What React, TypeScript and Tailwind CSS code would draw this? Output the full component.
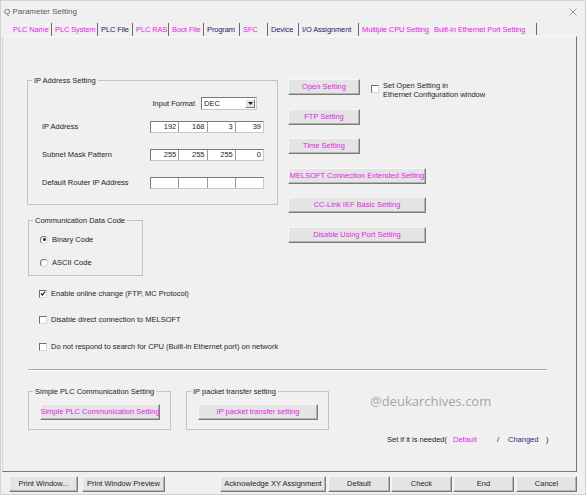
import React from "react"

const tabs = [
  { label: "PLC Name", w: "w-[41px]", c: "text-[#e21ee6]", sep: false },
  { label: "PLC System", w: "w-[46px]", c: "text-[#e21ee6]", sep: true },
  { label: "PLC File", w: "w-[35px]", c: "text-[#22226e]", sep: true },
  { label: "PLC RAS", w: "w-[36px]", c: "text-[#e21ee6]", sep: true },
  { label: "Boot File", w: "w-[35px]", c: "text-[#e21ee6]", sep: true },
  { label: "Program", w: "w-[36px]", c: "text-[#22226e]", sep: true },
  { label: "SFC", w: "w-[28px]", c: "text-[#e21ee6]", sep: true },
  { label: "Device", w: "w-[31px]", c: "text-[#22226e]", sep: true },
  { label: "I/O Assignment", w: "w-[60px]", c: "text-[#22226e]", sep: true },
  { label: "Multiple CPU Setting", w: "w-[73px]", c: "text-[#e21ee6]", sep: true },
  { label: "Built-in Ethernet Port Setting", w: "w-[105px]", c: "text-[#e21ee6]", sep: false },
]

function Btn({ w, children, dark }: { w: string; children: React.ReactNode; dark?: boolean }) {
  return (
    <div
      className={`flex h-[16px] shrink-0 items-center justify-center whitespace-nowrap border border-t-[#f6f6f6] border-l-[#f6f6f6] border-r-[#7a7a7a] border-b-[#7a7a7a] bg-[#e4e4e4] shadow-[inset_-1px_-1px_0_#b4b4b4] ${w} ${dark ? "text-[#1e1e1e]" : "text-[#e21ee6]"}`}
    >
      {children}
    </div>
  )
}

function Check({ on }: { on?: boolean }) {
  return (
    <div className="flex h-[8px] w-[8px] shrink-0 items-center justify-center border border-t-[#6e6e6e] border-l-[#6e6e6e] border-r-[#d8d8d8] border-b-[#d8d8d8] bg-white">
      {on && (
        <svg width="7" height="7" viewBox="0 0 7 7">
          <path d="M1 3.4 L2.8 5.4 L6 1.2" fill="none" stroke="#1e1e1e" strokeWidth="1.4" />
        </svg>
      )}
    </div>
  )
}

function Radio({ on }: { on?: boolean }) {
  return (
    <div className="flex h-[8px] w-[8px] shrink-0 items-center justify-center rounded-full border border-t-[#6e6e6e] border-l-[#6e6e6e] border-r-[#d8d8d8] border-b-[#d8d8d8] bg-white">
      {on && <div className="h-[3px] w-[3px] rounded-full bg-[#1e1e1e]" />}
    </div>
  )
}

function IpBoxes({ values }: { values: string[] }) {
  return (
    <div className="flex h-[12px] w-[114px] border border-t-[#7a7a7a] border-l-[#7a7a7a] border-r-[#c8c8c8] border-b-[#c8c8c8] bg-white">
      {values.map((v, i) => (
        <div
          key={i}
          className={`flex flex-1 items-center justify-end pr-[2px] leading-none ${i > 0 ? "border-l border-[#9a9a9a]" : ""}`}
        >
          {v}
        </div>
      ))}
    </div>
  )
}

export default function App() {
  return (
    <div className="relative h-[495px] w-[586px] overflow-hidden bg-[#f0f0f0] font-['Liberation_Sans',Arial,sans-serif] text-[7.5px] text-[#1e1e1e] shadow-[inset_0_0_0_1px_#d2d2d2]">
      {/* Title bar */}
      <div className="flex h-[22px] items-center justify-between pl-[4px] pr-[9px] pt-[2px]">
        <span className="text-[8px] text-[#5c5c5c]">Q Parameter Setting</span>
        <svg width="8" height="8" viewBox="0 0 8 8">
          <path d="M0.5 0.5 L7.5 7.5 M7.5 0.5 L0.5 7.5" stroke="#8f8f8f" strokeWidth="0.9" />
        </svg>
      </div>

      {/* Tabs */}
      <div className="flex h-[14px] items-center pl-[10px] tracking-[-0.12px]">
        {tabs.map((t) => (
          <div
            key={t.label}
            className={`flex h-[13px] items-center whitespace-nowrap pl-[3px] pt-[1px] ${t.w} ${t.c} ${t.sep ? "border-l border-[#6a6a6a]" : ""}`}
          >
            {t.label}
          </div>
        ))}
        <div className="h-[12px] border-l border-[#6a6a6a]" />
      </div>

      {/* Panel */}
      <div className="ml-[2px] h-[436px] w-[575px] border border-t-[#fafafa] border-l-[#d8d8d8] border-r-[#777777] border-b-[#777777]">
        <div className="ml-[24px] mt-[39px] flex items-start">
          {/* left column */}
          <div className="flex w-[251px] flex-col">
            <fieldset className="h-[129px] w-[251px] border border-[#c4c4c4]">
              <legend className="ml-[4px] px-[2px] leading-[9px]">IP Address Setting</legend>
              <div className="mt-[12px] flex h-[13px] items-center justify-end gap-[6px] pr-[20px]">
                <span>Input Format</span>
                <div className="flex h-[13px] w-[56px] items-center justify-between border border-t-[#7a7a7a] border-l-[#7a7a7a] border-r-[#c8c8c8] border-b-[#c8c8c8] bg-white pl-[2px] pr-[1px]">
                  <span className="leading-none">DEC</span>
                  <div className="flex h-[9px] w-[10px] items-center justify-center border border-t-white border-l-white border-r-[#7a7a7a] border-b-[#7a7a7a] bg-[#e4e4e4]">
                    <svg width="5" height="3" viewBox="0 0 5 3">
                      <path d="M0 0 H5 L2.5 3 Z" fill="#1e1e1e" />
                    </svg>
                  </div>
                </div>
              </div>
              <div className="mt-[11px] flex h-[12px] items-center pl-[14px]">
                <span className="w-[108px]">IP Address</span>
                <IpBoxes values={["192", "168", "3", "39"]} />
              </div>
              <div className="mt-[16px] flex h-[12px] items-center pl-[14px]">
                <span className="w-[108px]">Subnet Mask Pattern</span>
                <IpBoxes values={["255", "255", "255", "0"]} />
              </div>
              <div className="mt-[16px] flex h-[12px] items-center pl-[14px]">
                <span className="w-[108px]">Default Router IP Address</span>
                <IpBoxes values={["", "", "", ""]} />
              </div>
            </fieldset>

            <fieldset className="ml-[1px] mt-[11px] h-[60px] w-[115px] border border-[#c4c4c4]">
              <legend className="ml-[4px] px-[2px] leading-[9px]">Communication Data Code</legend>
              <div className="mt-[10px] flex h-[9px] items-center gap-[4px] pl-[11px]">
                <Radio on />
                <span>Binary Code</span>
              </div>
              <div className="mt-[14px] flex h-[9px] items-center gap-[4px] pl-[11px]">
                <Radio />
                <span>ASCII Code</span>
              </div>
            </fieldset>
          </div>

          {/* right column */}
          <div className="ml-[10px] flex flex-col gap-[13.5px] pt-[3px]">
            <div className="flex h-[16px] items-start">
              <Btn w="w-[72px]">Open Setting</Btn>
              <div className="ml-[11px] mt-[6px]">
                <Check />
              </div>
              <div className="ml-[4px] mt-[1.5px] whitespace-nowrap leading-[9px]">
                Set Open Setting in
                <br />
                Ethernet Configuration window
              </div>
            </div>
            <Btn w="w-[72px]">FTP Setting</Btn>
            <Btn w="w-[72px]">Time Setting</Btn>
            <Btn w="w-[138px]">MELSOFT Connection Extended Setting</Btn>
            <Btn w="w-[138px]">CC-Link IEF Basic Setting</Btn>
            <Btn w="w-[138px]">Disable Using Port Setting</Btn>
          </div>
        </div>

        {/* checkboxes */}
        <div className="ml-[36px] mt-[13px] flex h-[9px] items-center gap-[4px]">
          <Check on />
          <span>Enable online change (FTP, MC Protocol)</span>
        </div>
        <div className="ml-[36px] mt-[17px] flex h-[9px] items-center gap-[4px]">
          <Check />
          <span>Disable direct connection to MELSOFT</span>
        </div>
        <div className="ml-[36px] mt-[18px] flex h-[9px] items-center gap-[4px]">
          <Check />
          <span>Do not respond to search for CPU (Built-in Ethernet port) on network</span>
        </div>

        <div className="ml-[25px] mt-[18px] w-[519px] border-t border-b border-t-[#a8a8a8] border-b-white" />

        {/* bottom groups */}
        <div className="ml-[25px] mt-[16px] flex items-start">
          <fieldset className="h-[43px] w-[143px] border border-[#c4c4c4]">
            <legend className="ml-[4px] px-[2px] leading-[9px]">Simple PLC Communication Setting</legend>
            <div className="ml-[11px] mt-[8px]">
              <Btn w="w-[120px]">Simple PLC Communication Setting</Btn>
            </div>
          </fieldset>
          <fieldset className="ml-[15px] h-[43px] w-[143px] border border-[#c4c4c4]">
            <legend className="ml-[4px] px-[2px] leading-[9px]">IP packet transfer setting</legend>
            <div className="ml-[11px] mt-[8px]">
              <Btn w="w-[120px]">IP packet transfer setting</Btn>
            </div>
          </fieldset>
          <div className="ml-[41px] mt-[6px] font-['Open_Sans',sans-serif] text-[13px] leading-[16px] text-[#a6a6a6]">
            @deukarchives.com
          </div>
        </div>

        <div className="ml-[384px] mt-[5px] flex h-[9px] items-center whitespace-nowrap">
          <span className="w-[66px]">Set if it is needed(</span>
          <span className="w-[44px] text-[#e21ee6]">Default</span>
          <span className="w-[11px]">/</span>
          <span className="w-[38px] text-[#2e2e86]">Changed</span>
          <span>)</span>
        </div>
      </div>

      {/* bottom buttons */}
      <div className="mt-[4px] flex h-[15px] pl-[9px]">
        <Btn w="w-[69px]" dark>Print Window...</Btn>
        <div className="ml-[4px]">
          <Btn w="w-[83px]" dark>Print Window Preview</Btn>
        </div>
        <div className="ml-[55px]">
          <Btn w="w-[106px]" dark>Acknowledge XY Assignment</Btn>
        </div>
        <div className="ml-[2px]">
          <Btn w="w-[62px]" dark>Default</Btn>
        </div>
        <div className="ml-[1px]">
          <Btn w="w-[61px]" dark>Check</Btn>
        </div>
        <div className="ml-[1px]">
          <Btn w="w-[61px]" dark>End</Btn>
        </div>
        <div className="ml-[2px]">
          <Btn w="w-[61px]" dark>Cancel</Btn>
        </div>
      </div>
    </div>
  )
}
